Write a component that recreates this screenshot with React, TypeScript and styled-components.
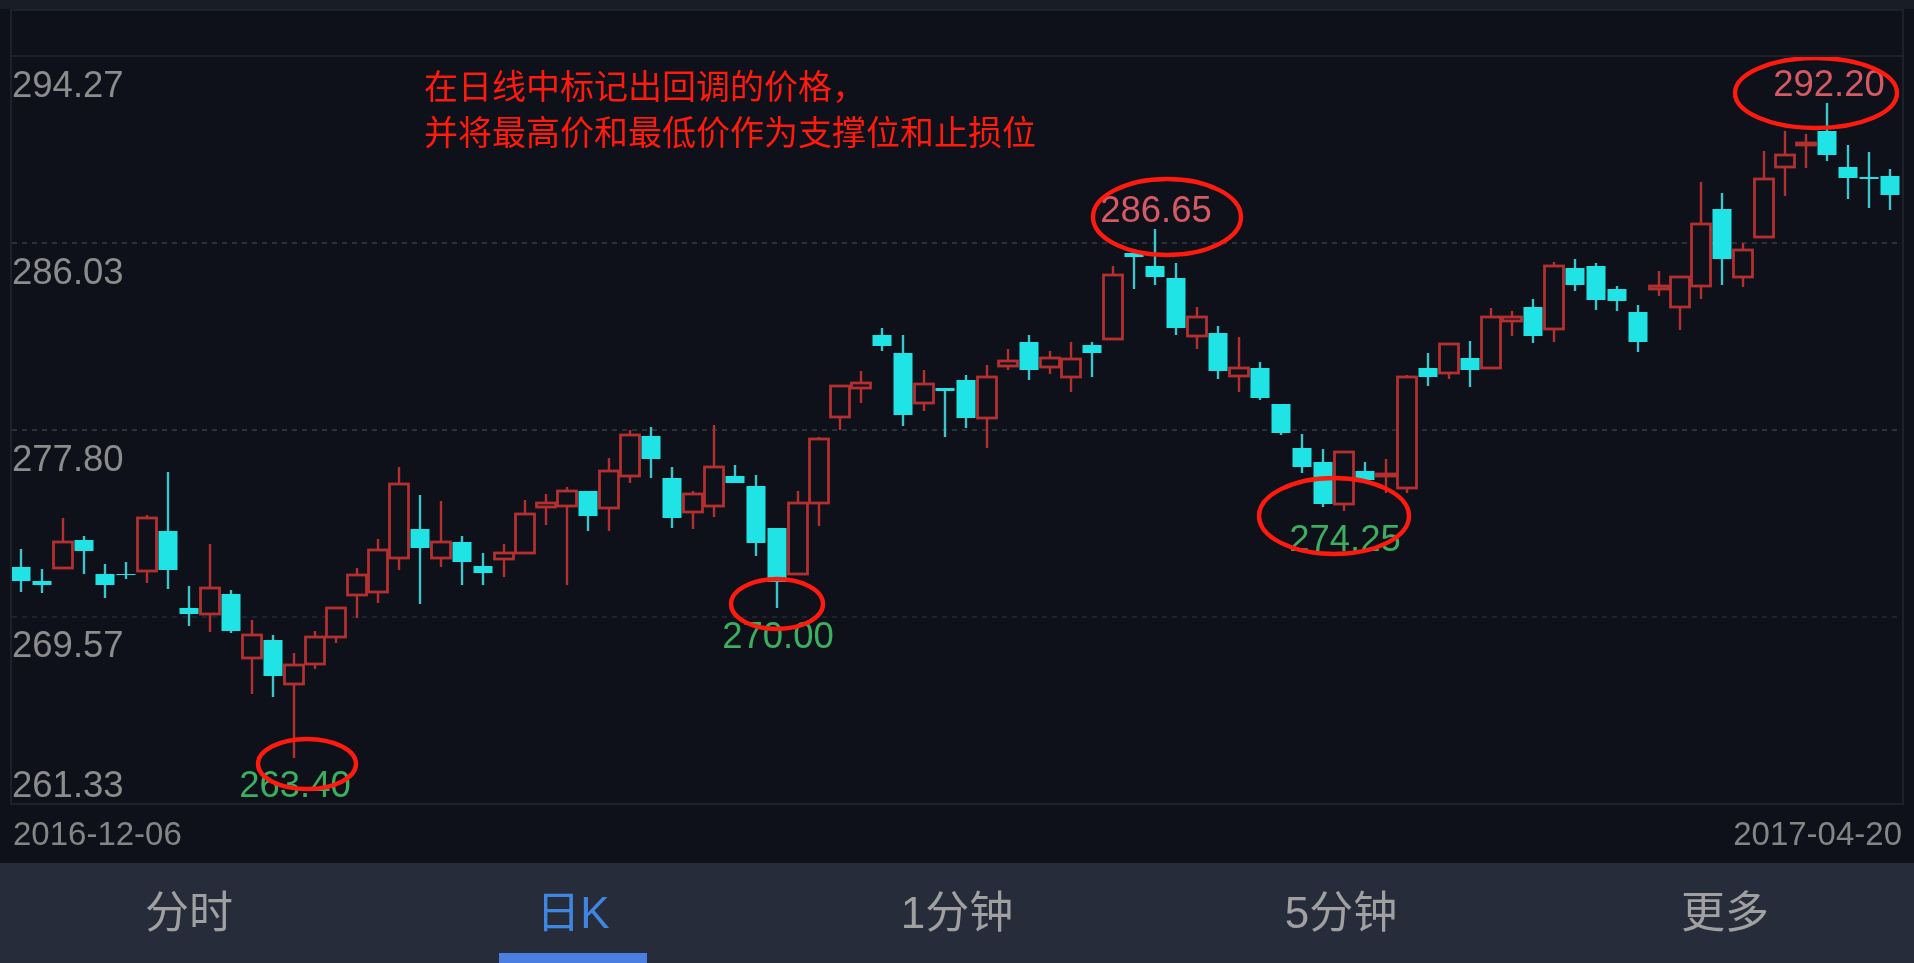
import styled, { createGlobalStyle } from "styled-components";

const PLOT_X = 12;
const PLOT_Y = 57;
const CJK = `"Liberation Sans", "Noto Sans CJK SC", sans-serif`;

// kind, high, body top, body bottom, low (page pixels), one candle every 21px
type Candle = ["r" | "c", number, number, number, number];

const CANDLES: Candle[] = [
  ["c", 549, 567, 581, 592],
  ["c", 569, 581, 585, 593],
  ["r", 518, 542, 568, 568],
  ["c", 536, 540, 551, 574],
  ["c", 564, 574, 585, 598],
  ["c", 562, 574, 575, 579],
  ["r", 515, 518, 571, 583],
  ["c", 472, 531, 570, 589],
  ["c", 586, 608, 614, 626],
  ["r", 544, 588, 614, 632],
  ["c", 590, 594, 631, 633],
  ["r", 620, 635, 658, 694],
  ["c", 635, 640, 676, 697],
  ["r", 653, 665, 684, 758],
  ["r", 631, 637, 664, 669],
  ["r", 608, 608, 637, 643],
  ["r", 568, 575, 595, 618],
  ["r", 539, 550, 592, 603],
  ["r", 467, 484, 558, 570],
  ["c", 495, 529, 548, 604],
  ["r", 501, 542, 558, 567],
  ["c", 536, 542, 562, 585],
  ["c", 553, 566, 573, 585],
  ["r", 544, 553, 559, 577],
  ["r", 500, 514, 553, 553],
  ["r", 494, 503, 507, 525],
  ["r", 487, 491, 506, 585],
  ["c", 491, 491, 516, 531],
  ["r", 458, 471, 508, 531],
  ["r", 430, 435, 476, 483],
  ["c", 427, 436, 459, 478],
  ["c", 467, 478, 518, 528],
  ["r", 491, 494, 512, 529],
  ["r", 425, 467, 506, 517],
  ["c", 465, 476, 483, 483],
  ["c", 475, 486, 543, 556],
  ["c", 528, 528, 582, 608],
  ["r", 491, 503, 574, 574],
  ["r", 437, 439, 503, 526],
  ["r", 386, 386, 417, 430],
  ["r", 371, 383, 388, 403],
  ["c", 328, 335, 346, 351],
  ["c", 335, 353, 415, 426],
  ["r", 370, 384, 403, 411],
  ["c", 388, 388, 391, 437],
  ["c", 375, 380, 418, 428],
  ["r", 365, 377, 418, 448],
  ["r", 349, 361, 366, 370],
  ["c", 335, 342, 370, 380],
  ["r", 351, 358, 367, 374],
  ["r", 342, 359, 377, 392],
  ["c", 342, 345, 353, 377],
  ["r", 266, 275, 339, 339],
  ["c", 250, 253, 257, 289],
  ["c", 229, 266, 277, 285],
  ["c", 263, 278, 328, 335],
  ["r", 307, 317, 336, 349],
  ["c", 326, 333, 371, 379],
  ["r", 337, 368, 376, 392],
  ["c", 362, 368, 398, 400],
  ["c", 404, 404, 433, 435],
  ["c", 434, 448, 467, 473],
  ["c", 449, 462, 504, 507],
  ["r", 452, 452, 504, 511],
  ["c", 462, 471, 480, 482],
  ["r", 459, 474, 476, 493],
  ["r", 375, 377, 488, 493],
  ["c", 353, 368, 377, 386],
  ["r", 344, 344, 373, 379],
  ["c", 341, 358, 370, 387],
  ["r", 308, 317, 368, 368],
  ["r", 311, 317, 321, 336],
  ["c", 299, 307, 336, 343],
  ["r", 262, 266, 329, 342],
  ["c", 259, 268, 285, 291],
  ["c", 263, 266, 300, 310],
  ["c", 286, 289, 301, 311],
  ["c", 305, 312, 342, 352],
  ["r", 271, 286, 289, 296],
  ["r", 277, 277, 307, 330],
  ["r", 182, 224, 286, 299],
  ["c", 193, 209, 259, 285],
  ["r", 243, 250, 277, 287],
  ["r", 151, 179, 237, 237],
  ["r", 131, 155, 167, 196],
  ["r", 134, 143, 145, 168],
  ["c", 103, 131, 155, 161],
  ["c", 145, 167, 178, 199],
  ["c", 152, 177, 179, 208],
  ["c", 169, 176, 195, 210],
];

const AXIS_LABELS = [
  { text: "294.27", y: 85 },
  { text: "286.03", y: 272 },
  { text: "277.80", y: 459 },
  { text: "269.57", y: 645 },
  { text: "261.33", y: 785 },
];

const PRICE_MARKS = [
  { text: "263.40", x: 295, y: 785, up: false },
  { text: "270.00", x: 778, y: 636, up: false },
  { text: "286.65", x: 1156, y: 210, up: true },
  { text: "274.25", x: 1345, y: 539, up: false },
  { text: "292.20", x: 1829, y: 84, up: true },
];

const RINGS = [
  { cx: 307, cy: 764, rx: 49, ry: 25 },
  { cx: 777, cy: 604, rx: 46, ry: 25 },
  { cx: 1167, cy: 217, rx: 74, ry: 38 },
  { cx: 1334, cy: 516, rx: 75, ry: 38 },
  { cx: 1816, cy: 93, rx: 81, ry: 35 },
];

const TABS = ["分时", "日K", "1分钟", "5分钟", "更多"];

function CandleMark({ candle, index }: { candle: Candle; index: number }) {
  const [kind, high, top, bottom, low] = candle;
  const x = 21 + index * 21;
  const wick = kind === "r" ? "#b32f30" : "#3fc4cc";
  const height = bottom - top;

  return (
    <g>
      <line x1={x} x2={x} y1={high} y2={top} stroke={wick} strokeWidth={2.4} />
      <line x1={x} x2={x} y1={bottom} y2={low} stroke={wick} strokeWidth={2.4} />
      {kind === "r" ? (
        <rect
          x={x - 9.5}
          y={top}
          width={19}
          height={height}
          fill="#0e1119"
          stroke="#b32f30"
          strokeWidth={2.8}
        />
      ) : (
        <rect x={x - 9.5} y={top} width={19} height={height} fill="#1fe3e4" />
      )}
    </g>
  );
}

export default function App() {
  return (
    <Page>
      <GlobalStyle />
      <TopBand />
      <ChartFrame>
        <ChartHeader />
        <Plot>
          <svg
            width="1890"
            height="746"
            viewBox={`${PLOT_X} ${PLOT_Y} 1890 746`}
          >
            <GridLine x1="12" x2="1902" y1="243" y2="243" />
            <GridLine x1="12" x2="1902" y1="430" y2="430" />
            <GridLine x1="12" x2="1902" y1="617" y2="617" $faint />
            {CANDLES.map((candle, i) => (
              <CandleMark key={i} candle={candle} index={i} />
            ))}
          </svg>

          {AXIS_LABELS.map((label) => (
            <AxisLabel key={label.text} $y={label.y}>
              {label.text}
            </AxisLabel>
          ))}

          {PRICE_MARKS.map((mark) => (
            <PriceMark key={mark.text} $x={mark.x} $y={mark.y} $up={mark.up}>
              {mark.text}
            </PriceMark>
          ))}

          <Note>
            <div>在日线中标记出回调的价格，</div>
            <div>并将最高价和最低价作为支撑位和止损位</div>
          </Note>

          <RingLayer
            width="1890"
            height="746"
            viewBox={`${PLOT_X} ${PLOT_Y} 1890 746`}
          >
            {RINGS.map((ring) => (
              <ellipse
                key={ring.cx}
                {...ring}
                fill="none"
                stroke="#ff1a10"
                strokeWidth={4.4}
              />
            ))}
          </RingLayer>
        </Plot>
      </ChartFrame>

      <DateRow>
        <span>2016-12-06</span>
        <span>2017-04-20</span>
      </DateRow>

      <TabBar>
        {TABS.map((tab) => (
          <Tab key={tab} $active={tab === "日K"}>
            {tab}
          </Tab>
        ))}
      </TabBar>
    </Page>
  );
}

const GlobalStyle = createGlobalStyle`
  html, body {
    margin: 0;
    padding: 0;
    background: #0e1119;
  }
`;

const Page = styled.div`
  width: 1914px;
  height: 963px;
  display: flex;
  flex-direction: column;
  overflow: hidden;
  background: #0e1119;
  font-family: ${CJK};
  filter: blur(0.5px);
`;

const TopBand = styled.div`
  height: 9px;
  flex: none;
  background: #191d27;
`;

const ChartFrame = styled.div`
  flex: none;
  box-sizing: border-box;
  width: 1894px;
  height: 796px;
  margin: 0 10px;
  border: 2px solid #1e2129;
  display: flex;
  flex-direction: column;
`;

const ChartHeader = styled.div`
  height: 44px;
  flex: none;
  border-bottom: 2px solid #1e2129;
`;

const Plot = styled.div`
  position: relative;
  flex: 1;

  svg {
    display: block;
  }
`;

const GridLine = styled.line<{ $faint?: boolean }>`
  stroke: ${(p) => (p.$faint ? "#1f232c" : "#2c3039")};
  stroke-width: 2;
  stroke-dasharray: 5 5;
`;

const AxisLabel = styled.div<{ $y: number }>`
  position: absolute;
  left: 0;
  top: ${(p) => p.$y - PLOT_Y}px;
  transform: translateY(-50%);
  font-size: 36.5px;
  line-height: 1;
  color: #8c8c8c;
`;

const PriceMark = styled.div<{ $x: number; $y: number; $up: boolean }>`
  position: absolute;
  left: ${(p) => p.$x - PLOT_X}px;
  top: ${(p) => p.$y - PLOT_Y}px;
  transform: translate(-50%, -50%);
  font-size: 36.5px;
  line-height: 1;
  color: ${(p) => (p.$up ? "#d65a64" : "#3cae5f")};
`;

const Note = styled.div`
  position: absolute;
  left: ${424 - PLOT_X}px;
  top: ${64 - PLOT_Y}px;
  font-size: 34px;
  line-height: 46px;
  color: #ff1a0d;
  white-space: nowrap;
`;

const RingLayer = styled.svg`
  position: absolute;
  left: 0;
  top: 0;
  pointer-events: none;
`;

const DateRow = styled.div`
  flex: none;
  box-sizing: border-box;
  height: 58px;
  display: flex;
  align-items: center;
  justify-content: space-between;
  padding: 0 12px 0 13px;
  font-size: 33px;
  color: #858585;
`;

const TabBar = styled.div`
  flex: none;
  height: 100px;
  display: grid;
  grid-template-columns: repeat(5, 384px);
  justify-content: center;
  background: #272c3b;
`;

const Tab = styled.div<{ $active: boolean }>`
  position: relative;
  display: flex;
  align-items: center;
  justify-content: center;
  padding-bottom: 9px;
  font-size: 44px;
  color: ${(p) => (p.$active ? "#3f86e0" : "#a0a0a0")};

  &::after {
    content: "";
    display: ${(p) => (p.$active ? "block" : "none")};
    position: absolute;
    left: 50%;
    bottom: 0;
    width: 148px;
    height: 10px;
    margin-left: -74px;
    background: #4a7ee0;
  }
`;
